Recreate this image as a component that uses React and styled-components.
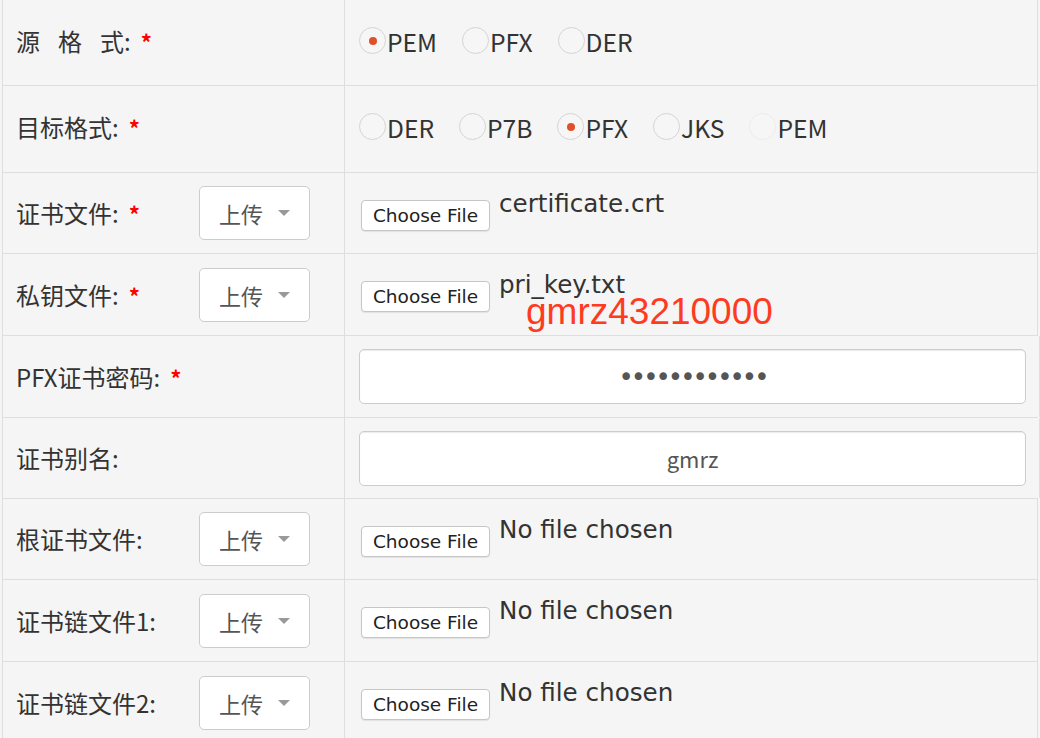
import React from 'react'
import styled, { createGlobalStyle } from 'styled-components'

const GlobalStyle = createGlobalStyle`
  html, body {
    margin: 0;
    padding: 0;
    background: #f5f5f5;
  }
  body {
    font-family: "Noto Sans CJK SC", "Noto Sans", sans-serif;
    color: #333;
  }
`

const rows = [
  { label: '源格式', spaced: true, required: true, height: 86, lift: 4, type: 'radio', options: ['PEM', 'PFX', 'DER'], checked: 'PEM' },
  { label: '目标格式:', required: true, height: 87, lift: 5, type: 'radio', options: ['DER', 'P7B', 'PFX', 'JKS', 'PEM'], checked: 'PFX', faint: 'PEM' },
  { label: '证书文件:', required: true, height: 81, type: 'file', select: true, file: 'certificate.crt' },
  { label: '私钥文件:', required: true, height: 82, type: 'file', select: true, file: 'pri_key.txt', note: 'gmrz43210000' },
  { label: 'PFX证书密码:', required: true, height: 82, type: 'password', value: 'gmrz43210000' },
  { label: '证书别名:', height: 81, type: 'text', value: 'gmrz' },
  { label: '根证书文件:', height: 81, type: 'file', select: true },
  { label: '证书链文件1:', height: 82, type: 'file', select: true },
  { label: '证书链文件2:', height: 82, type: 'file', select: true },
]

function App() {
  return (
    <>
      <GlobalStyle />
      <Table>
        {rows.map((row, i) => (
          <Row key={i} $h={row.height}>
            <LabelCell $lift={row.lift || 0}>
              <LabelText>
                {row.spaced ? (<><Spaced>源格</Spaced>式:</>) : row.label}
                {row.required && <Star>*</Star>}
              </LabelText>
              {row.select && (
                <Select>
                  上传
                  <Caret />
                </Select>
              )}
            </LabelCell>

            {row.type === 'radio' && (
              <ValueCell $lift={row.lift || 0}>
                {row.options.map((opt) => (
                  <RadioItem key={opt}>
                    <Circle $faint={row.faint === opt}>
                      {row.checked === opt && <Dot />}
                    </Circle>
                    {opt}
                  </RadioItem>
                ))}
              </ValueCell>
            )}

            {row.type === 'file' && (
              <ValueCell $top>
                <FileField>
                  <FileBtn>Choose File</FileBtn>
                  <FileName>{row.file || 'No file chosen'}</FileName>
                </FileField>
                {row.note && <Note>{row.note}</Note>}
              </ValueCell>
            )}

            {(row.type === 'password' || row.type === 'text') && (
              <ValueCell>
                <TextInput type={row.type} value={row.value} readOnly $pw={row.type === 'password'} />
              </ValueCell>
            )}
          </Row>
        ))}
      </Table>
    </>
  )
}

const Table = styled.div`
  padding-left: 2px;
  width: 1036px;
`

const Row = styled.div`
  display: grid;
  grid-template-columns: 343px 1fr;
  height: ${(p) => p.$h}px;
  box-sizing: border-box;
  border-bottom: 1px solid #dedede;
`

const LabelCell = styled.div`
  display: flex;
  align-items: center;
  padding-left: 13px;
  padding-bottom: ${(p) => p.$lift}px;
  border-left: 1px solid #dedede;
  border-right: 1px solid #dedede;
`

const LabelText = styled.div`
  width: 183px;
  font-size: 24px;
  line-height: 30px;
  color: #333;
  white-space: nowrap;
`

const Spaced = styled.span`
  letter-spacing: 18px;
`

const Star = styled.span`
  color: #f00;
  font-size: 22px;
  font-weight: bold;
  margin-left: 10px;
`

const Select = styled.div`
  width: 111px;
  height: 54px;
  box-sizing: border-box;
  display: flex;
  align-items: center;
  padding-left: 19px;
  background: #fff;
  border: 1px solid #ccc;
  border-radius: 5px;
  font-size: 22px;
  color: #555;
`

const Caret = styled.span`
  width: 0;
  height: 0;
  margin-left: 15px;
  border-top: 6px solid #999;
  border-left: 6px solid transparent;
  border-right: 6px solid transparent;
`

const ValueCell = styled.div`
  position: relative;
  display: flex;
  align-items: ${(p) => (p.$top ? 'flex-start' : 'center')};
  padding: ${(p) => (p.$top ? '17px' : '0')} 13px ${(p) => p.$lift || 0}px 14px;
  border-right: 1px solid #dedede;
`

const RadioItem = styled.label`
  display: flex;
  align-items: center;
  margin-right: 25px;
  font-size: 24.6px;
  color: #333;
`

const Circle = styled.span`
  width: 27px;
  height: 27px;
  box-sizing: border-box;
  margin-right: 1px;
  border-radius: 50%;
  border: 1px solid ${(p) => (p.$faint ? '#ececec' : '#d4d4d4')};
  background: #f6f6f6;
  display: flex;
  align-items: center;
  justify-content: center;
`

const Dot = styled.span`
  width: 8px;
  height: 8px;
  border-radius: 50%;
  background: #e0502a;
`

const FileField = styled.div`
  display: flex;
  align-items: flex-start;
  margin-left: 2px;
`

const FileBtn = styled.div`
  margin-top: 10px;
  width: 129px;
  height: 31px;
  box-sizing: border-box;
  display: flex;
  align-items: center;
  justify-content: center;
  background: #fff;
  border: 1px solid #c6c6c6;
  border-radius: 4px;
  box-shadow: 0 1px 1px rgba(0, 0, 0, 0.08);
  font-family: "DejaVu Sans", sans-serif;
  font-size: 18.5px;
  color: #222;
`

const FileName = styled.span`
  margin-left: 9px;
  font-family: "DejaVu Sans", sans-serif;
  font-size: 24.6px;
  line-height: 28px;
  color: #333;
`

const Note = styled.span`
  position: absolute;
  left: 181px;
  top: 40px;
  font-family: "Liberation Sans", Arial, sans-serif;
  font-size: 37px;
  line-height: 36px;
  color: #ff3b1f;
`

const TextInput = styled.input`
  width: 667px;
  height: 55px;
  box-sizing: border-box;
  border: 1px solid #ccc;
  border-radius: 5px;
  background: #fff;
  box-shadow: inset 0 1px 1px rgba(0, 0, 0, 0.08);
  text-align: center;
  font-family: ${(p) => (p.$pw ? '"DejaVu Sans"' : '"Noto Sans CJK SC"')}, sans-serif;
  font-size: ${(p) => (p.$pw ? '26px' : '22px')};
  letter-spacing: ${(p) => (p.$pw ? '-3px' : '0')};
  color: #555;
  outline: none;
  padding: 0 10px;
`

export default App
